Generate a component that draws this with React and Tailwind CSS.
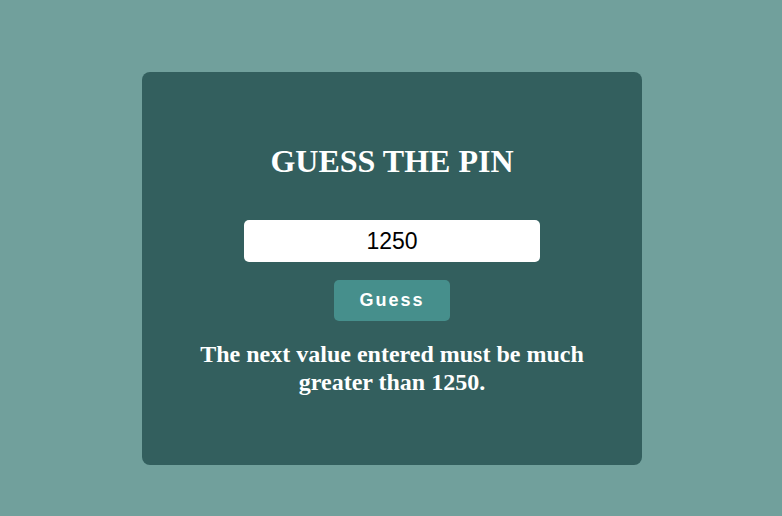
import React, { useState } from 'react';

const App = () => {
  const [value, setValue] = useState('1250');

  return (
    <div className="min-h-screen w-full bg-[#71a09c] pt-[72px] pl-[2px] flex justify-center items-start">
      <div className="w-[500px] h-[393px] bg-[#335f5e] rounded-lg flex flex-col items-center pt-[72px] px-[50px]">
        <h1 className="text-[32px] leading-[35px] font-bold text-white font-['Liberation_Serif',serif]">
          GUESS THE PIN
        </h1>
        <input
          type="text"
          value={value}
          onChange={(e) => setValue(e.target.value)}
          className="mt-[41px] w-[296px] h-[42px] bg-white rounded-[5px] text-center text-[23px] text-black font-['Liberation_Sans',sans-serif] outline-none"
        />
        <button className="mt-[18px] w-[116px] h-[41px] bg-[#468f8c] rounded-[5px] text-white font-bold text-[18px] tracking-[2px] font-['Liberation_Sans',sans-serif]">
          Guess
        </button>
        <p className="mt-[19px] text-[24px] leading-[28px] font-bold text-white text-center font-['Liberation_Serif',serif]">
          The next value entered must be much greater than 1250.
        </p>
      </div>
    </div>
  );
};

export default App;
